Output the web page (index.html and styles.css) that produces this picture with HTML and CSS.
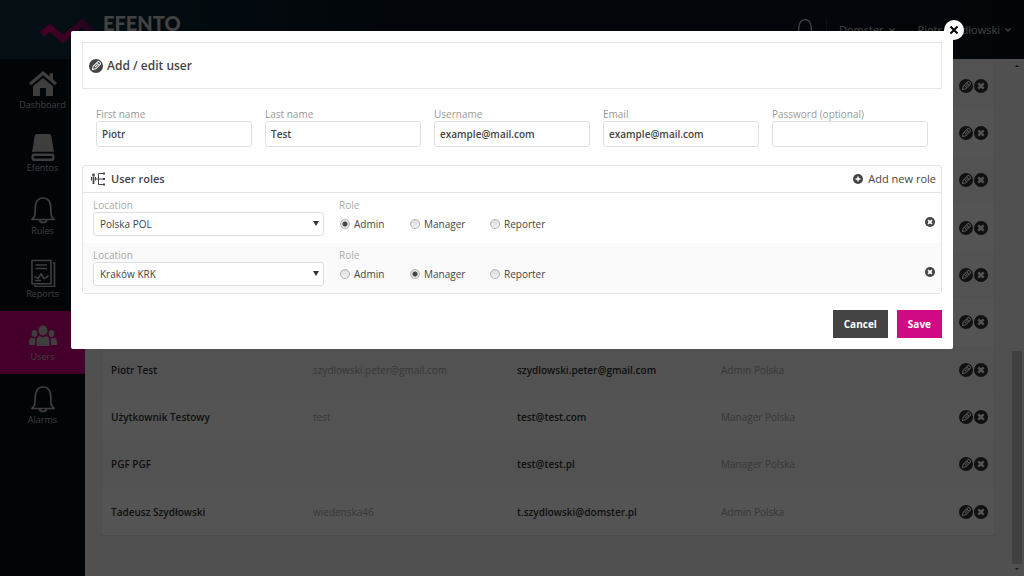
FILE: index.html
```html
<!DOCTYPE html>
<html lang="en">
<head>
<meta charset="utf-8">
<title>Efento – Users</title>
<link rel="stylesheet" href="styles.css">
</head>
<body>
<svg class="defs" aria-hidden="true">
  <symbol id="edit" viewBox="0 0 14 14">
    <circle cx="7" cy="7" r="7" fill="currentColor"/>
    <g class="cut" transform="rotate(45 7 7)"><path d="M5.2 2.8q0-1 1-1h1.6q1 0 1 1v6.4L7 12 5.200 9.200zM5.200 4.200h3.600M7 5v3.500"/></g>
  </symbol>
  <symbol id="remove" viewBox="0 0 14 14">
    <circle cx="7" cy="7" r="7" fill="currentColor"/>
    <path class="cross" d="M4.300 4.300l5.400 5.400M9.700 4.300l-5.400 5.400"/>
  </symbol>
  <symbol id="bell" viewBox="0 0 28 28">
    <path fill="none" stroke="currentColor" stroke-width="1.700" stroke-linejoin="round" d="M3 23.500c3-2.500 3.200-5 3.200-11C6.200 6 9 2 14 2s7.800 4 7.800 10.500c0 6 .2 8.500 3.200 11zM10.500 24c.6 3.300 6.400 3.300 7 0"/>
  </symbol>
  <symbol id="chevron" viewBox="0 0 8 8"><path d="M1.500 2.500L4 5l2.500-2.500" fill="none" stroke="currentColor" stroke-width="1.300"/></symbol>
</svg>

<div class="app">
  <header class="topbar">
    <div class="brand">
      <svg class="brand-mark" viewBox="0 0 57 28" aria-hidden="true">
        <defs><linearGradient id="mark"><stop offset="0" stop-color="#d0006f"/><stop offset=".5" stop-color="#b0006c"/><stop offset="1" stop-color="#4c1450"/></linearGradient></defs>
        <path d="M2 18l8-6 13 11 19-16 14 12" fill="none" stroke="url(#mark)" stroke-width="6.500"/>
      </svg>
      <span class="brand-name">EFENTO</span>
    </div>
    <div class="tools">
      <svg class="top-bell" aria-hidden="true"><use href="#bell"/></svg>
      <button class="menu menu-company" type="button">Domster <svg><use href="#chevron"/></svg></button>
      <button class="menu" type="button">Piotr Szydłowski <svg><use href="#chevron"/></svg></button>
    </div>
  </header>

  <nav class="sidebar">
    <a href="#"><svg viewBox="0 0 28 28"><path fill="currentColor" d="M14 1L0 13l2 2.300L14 5.200l12 10.100 2-2.300-4-3.500V3.500h-3.500v3zM4 16.300L14 8l10 8.300V26h-7v-8h-6v8H4z"/></svg>Dashboard</a>
    <a href="#"><svg viewBox="0 0 28 28"><path fill="currentColor" d="M8 1h12q2 0 2.300 2L25 19.500q-1-.7-2-.7H5q-1 0-2 .7L5.700 3Q6 1 8 1z"/><path fill="currentColor" fill-rule="evenodd" d="M5 20.500h18q2.500 0 2.500 2.200v3q0 2.300-2.500 2.300H5q-2.500 0-2.500-2.300v-3q0-2.200 2.500-2.200zM6 23q-1.300 0-1.300 1.200T6 25.500h16q1.300 0 1.300-1.300T22 23z"/></svg>Efentos</a>
    <a href="#"><svg><use href="#bell"/></svg>Rules</a>
    <a href="#"><svg viewBox="0 0 28 28" fill="none" stroke="currentColor" stroke-width="1.600"><path d="M3 1.500h19v23.300H3zM24 4h1.500v23.500H6V26M6.500 6H18M6.500 9.500H18M5.500 17.500l3.500 2 3-4.500 3 4.500 2-1 2.500-2M6 21.500h6"/></svg>Reports</a>
    <a href="#" class="active" aria-current="page"><svg viewBox="0 0 28 28" fill="currentColor"><ellipse cx="14" cy="8.500" rx="4.500" ry="5"/><ellipse cx="5.500" cy="11.500" rx="2.800" ry="3.500"/><ellipse cx="22.500" cy="11.500" rx="2.800" ry="3.500"/><path d="M7.500 24v-4.500q0-4.500 3-5.200 3.500 1.500 7 0 3 .7 3 5.200V24zM0 23v-3q0-3.800 2.500-4.200 2 1 4 .3-.500 1.500-.500 6.900zM28 23v-3q0-3.800-2.500-4.200-2 1-4 .3.500 1.500.5 6.900z"/></svg>Users</a>
    <a href="#"><svg><use href="#bell"/></svg>Alarms</a>
  </nav>

  <main class="content">
    <table class="users">
      <colgroup><col class="c-name"><col class="c-login"><col class="c-mail"><col class="c-role"><col class="c-act"></colgroup>
      <tbody id="rows"></tbody>
    </table>
  </main>
  <div class="scroller" aria-hidden="true"><i class="up"></i><i class="thumb"></i><i class="down"></i></div>
</div>

<div class="overlay">
  <section class="dialog" role="dialog" aria-modal="true" aria-labelledby="dialog-title">
    <button class="dismiss" type="button" aria-label="Close"><svg viewBox="0 0 10 10"><path d="M1.500 1.500l7 7M8.500 1.500l-7 7" stroke="#000" stroke-width="2"/></svg></button>
    <h1 class="title" id="dialog-title"><svg><use href="#edit"/></svg>Add / edit user</h1>
    <form>
      <div class="fields">
        <div class="field"><label for="first">First name</label><input id="first" type="text" value="Piotr"></div>
        <div class="field"><label for="last">Last name</label><input id="last" type="text" value="Test"></div>
        <div class="field"><label for="login">Username</label><input id="login" type="text" value="example@mail.com"></div>
        <div class="field"><label for="mail">Email</label><input id="mail" type="email" value="example@mail.com"></div>
        <div class="field"><label for="pass">Password (optional)</label><input id="pass" type="password"></div>
      </div>

      <div class="roles">
        <div class="roles-head">
          <h2><svg viewBox="0 0 14 14" fill="none" stroke="currentColor"><circle cx="2.500" cy="3" r="1.400" fill="currentColor" stroke="none"/><path stroke-width="1.800" d="M2.500 4.500V12"/><path d="M.5 5v3.500M4.500 5v3.500M4.500 7H13M12.500 1.500H7.500v11h5"/><path stroke-width="2" d="M12 1.500h2M12 7h2M12 12.500h2"/></svg>User roles</h2>
          <button class="add" type="button"><svg viewBox="0 0 14 14"><circle cx="7" cy="7" r="7" fill="currentColor"/><path d="M7 3.500v7M3.500 7h7" stroke="#fff" stroke-width="2"/></svg>Add new role</button>
        </div>
        <div class="role">
          <div class="location"><label for="loc1">Location</label><span class="select"><select id="loc1"><option>Polska POL</option></select></span></div>
          <fieldset><legend>Role</legend>
            <label class="admin"><input type="radio" name="r1" checked>Admin</label>
            <label class="manager"><input type="radio" name="r1">Manager</label>
            <label><input type="radio" name="r1">Reporter</label>
          </fieldset>
          <button class="drop" type="button" aria-label="Remove role"><svg><use href="#remove"/></svg></button>
        </div>
        <div class="role">
          <div class="location"><label for="loc2">Location</label><span class="select"><select id="loc2"><option>Kraków KRK</option></select></span></div>
          <fieldset><legend>Role</legend>
            <label class="admin"><input type="radio" name="r2">Admin</label>
            <label class="manager"><input type="radio" name="r2" checked>Manager</label>
            <label><input type="radio" name="r2">Reporter</label>
          </fieldset>
          <button class="drop" type="button" aria-label="Remove role"><svg><use href="#remove"/></svg></button>
        </div>
      </div>

      <div class="actions">
        <button class="cancel" type="button">Cancel</button>
        <button class="save" type="submit">Save</button>
      </div>
    </form>
  </section>
</div>
<script src="users.js"></script>
</body>
</html>
```

FILE: users.js
```js
const users = [
  ["", "", "", ""], ["", "", "", ""], ["", "", "", ""],
  ["", "", "", ""], ["", "", "", ""], ["", "", "", ""],
  ["Piotr Test", "szydlowski.peter@gmail.com", "szydlowski.peter@gmail.com", "Admin Polska"],
  ["Użytkownik Testowy", "test", "test@test.com", "Manager Polska"],
  ["PGF PGF", "", "test@test.pl", "Manager Polska"],
  ["Tadeusz Szydłowski", "wiedenska46", "t.szydlowski@domster.pl", "Admin Polska"]
];
const actions = '<td class="acts"><button type="button" aria-label="Edit"><svg><use href="#edit"/></svg></button><button type="button" aria-label="Delete"><svg><use href="#remove"/></svg></button></td>';
document.getElementById("rows").innerHTML = users.map(([name, login, mail, role]) =>
  `<tr><td class="strong">${name}</td><td>${login}</td><td class="strong">${mail}</td><td>${role}</td>${actions}</tr>`
).join("");
```

FILE: styles.css
```css
* { box-sizing: border-box; }
body { margin: 0; font: 10px/14px "Open Sans", "Noto Sans", sans-serif; color: #444; }
button, input, select { font: inherit; color: inherit; }
button { border: 0; padding: 0; background: none; }
svg { display: block; flex: none; }
.defs { position: absolute; width: 0; height: 0; }
.cut { fill: none; stroke: #fff; stroke-width: 1; }
.cross { stroke: #fff; stroke-width: 2.4; }

.app { display: grid; grid-template: 59px 1fr / 85px 1fr 13px; height: 100vh; overflow: hidden; background: #f3f3f3; }
.topbar { grid-column: 1 / -1; display: flex; justify-content: space-between; background: linear-gradient(90deg, #0e3040, #08131f 40%, #080f1b); color: #c8c8c8; }
.brand { display: flex; align-items: flex-start; gap: 6px; padding: 10px 0 0 40px; }
.brand-mark { width: 57px; height: 28px; margin-top: 6px; }
.brand-name { font: 900 20px/26px Lato, sans-serif; }
.tools { display: flex; align-items: flex-start; padding: 18px 12px 0 0; }
.top-bell { width: 22px; height: 22px; margin-right: 10px; }
.menu { display: flex; align-items: center; gap: 4px; height: 23px; font-size: 11px; }
.menu svg { width: 8px; height: 8px; }
.menu-company { margin-right: 22px; padding-left: 12px; border-left: 1px solid #333; }

.sidebar { display: flex; flex-direction: column; background: #07121b; }
.sidebar a { display: flex; flex-direction: column; align-items: center; height: 63px; padding-top: 11px; color: #bbb; font-size: 9px; text-decoration: none; }
.sidebar svg { width: 28px; height: 28px; }
.sidebar .active { background: #cf0080; }

.content { min-width: 0; padding: 3px 16px 0; overflow: hidden; }
.users { width: 100%; table-layout: fixed; border-collapse: separate; border-spacing: 0; border: 1px solid #e4e4e4; border-top: 0; background: #fdfdfd; }
.users tr { height: 47px; }
.users tr:nth-child(3n) { height: 48px; }
.users tr:nth-child(odd) { background: #f8f8f8; }
.users td { padding: 0 0 0 9px; color: #aaa; }
.users .strong { color: #333; font-weight: 600; }
.c-name { width: 202px; }
.c-login, .c-mail { width: 204px; }
.c-act { width: 44px; }
.users .acts { padding: 0 6px 0 0; font-size: 0; text-align: right; white-space: nowrap; }
.acts button { margin-left: 1px; color: #333; vertical-align: top; }
.acts svg { width: 14px; height: 14px; }
.scroller { display: flex; flex-direction: column; align-items: center; padding: 6px 1px 6px 0; background: #f1f1f1; }
.scroller i { border: 2px solid transparent; }
.scroller .up { border-top: 0; border-bottom-color: #222; }
.scroller .down { margin-top: 4px; border-top-color: #555; border-bottom: 0; }
.scroller .thumb { width: 10px; height: 213px; margin-top: auto; border: 0; background: #c1c1c1; }

.overlay { position: fixed; inset: 0; padding: 31px 71px; background: rgba(0, 0, 0, .67); }
.dialog { position: relative; padding: 11px; border-radius: 2px; background: #fff; }
.dismiss { position: absolute; top: -11px; right: -11px; display: grid; place-items: center; width: 20px; height: 20px; border-radius: 50%; background: #fff; }
.dismiss svg { width: 10px; height: 10px; }
.title { display: flex; align-items: center; gap: 4px; height: 47px; margin: 0; padding: 0 6px; border: 1px solid #e6e6e6; font-size: 12px; font-weight: 600; }
.title svg { width: 14px; height: 14px; }

.fields { display: grid; grid-template-columns: repeat(5, 1fr); gap: 13px; padding: 18px 14px 18px; }
.field label { display: block; color: #999; }
.field input { display: block; width: 100%; height: 26px; padding: 0 5px; border: 1px solid #e0e0e0; border-radius: 3px; font-weight: 600; }

.roles { border: 1px solid #e4e4e4; border-radius: 3px; }
.roles-head { display: flex; align-items: center; justify-content: space-between; height: 27px; padding: 0 5px 0 8px; border-bottom: 1px solid #e4e4e4; }
.roles h2 { display: flex; align-items: center; gap: 6px; margin: 0; font-size: 11px; font-weight: 600; }
.roles h2 svg { width: 14px; height: 14px; }
.add { display: flex; align-items: center; gap: 5px; font-size: 11px; }
.add svg, .drop svg { width: 10px; height: 10px; }
.role { display: flex; align-items: flex-start; height: 50px; padding: 6px 6px 0 10px; }
.role:last-child { background: #fafafa; }
.location { flex: 0 1 231px; margin-right: 15px; }
.location > label, legend { display: block; padding: 0; color: #aaa; line-height: 13px; }
.select { position: relative; display: block; }
.select::after { content: ""; position: absolute; top: 9px; right: 5px; border: 3px solid transparent; border-top: 5px solid #333; border-bottom: 0; }
select { display: block; width: 100%; height: 24px; padding: 0 6px; appearance: none; border: 1px solid #e0e0e0; border-radius: 3px; background: #fff; }
fieldset { display: flex; flex: 1; margin: 0; padding: 0; border: 0; }
fieldset label { display: flex; align-items: center; gap: 4px; height: 24px; }
.admin { width: 70px; }
.manager { width: 80px; }
fieldset input { width: 10px; height: 10px; margin: 0 0 0 1px; appearance: none; border: 1px solid #b4b4b4; border-radius: 50%; background: linear-gradient(#ddd, #f2f2f2); }
fieldset input:checked { background: radial-gradient(circle, #444 0 2px, #e4e4e4 3px); }
.drop { padding-top: 18px; }
.actions { display: flex; justify-content: flex-end; gap: 9px; padding-top: 16px; }
.actions button { height: 28px; padding: 0 11px; background: #444; color: #fff; font-weight: 700; }
.actions .save { background: #cf0a82; }
```
